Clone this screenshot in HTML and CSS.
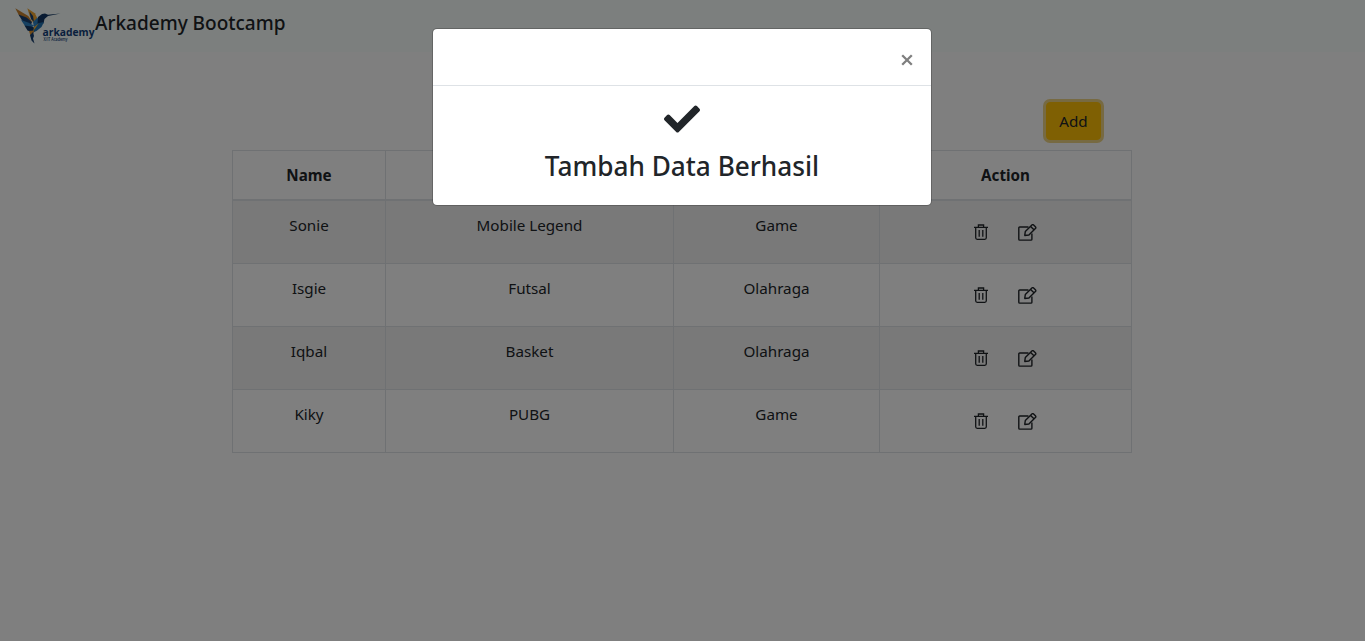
FILE: index.html
```html
<!DOCTYPE html>
<html lang="id">
<head>
<meta charset="utf-8">
<title>Arkademy Bootcamp</title>
<link rel="stylesheet" href="styles.css">
</head>
<body>
<svg class="sprite" width="0" height="0">
  <symbol id="trash" viewBox="0 0 14 16">
    <g fill="none" stroke="currentColor" stroke-width="1.3">
      <path d="M0 3.3h14M4.4 3V1h5.2v2M1.7 3.5v10.3c0 .9.6 1.5 1.5 1.5h7.6c.9 0 1.5-.6 1.5-1.5V3.5M5.2 6v6.8M8.8 6v6.8"/>
    </g>
  </symbol>
  <symbol id="edit" viewBox="0 0 19 17">
    <g fill="none" stroke="currentColor" stroke-width="1.4" stroke-linejoin="round">
      <path d="M10.5 3H1.7a.9.9 0 0 0-.9.9v11.3c0 .5.4.9.9.9H13c.5 0 .9-.4.9-.9V9.500"/>
      <path d="M6.2 11l.5-3.200 6.600-6.600c.5-.5 1.200-.5 1.700 0l1.800 1.800c.5.5.5 1.200 0 1.700l-6.500 6.500-4.100.5zM12 2.600l3.400 3.400" transform="translate(.6 -.2)"/>
    </g>
  </symbol>
</svg>
<nav class="navbar">
  <svg class="logo" width="82" height="40" viewBox="0 0 82 40">
    <path fill="#c9822f" d="M1.300 2.300l13 7.700 4 6-5-2-8-4z"/>
    <path fill="#173f70" d="M4.500 8.500l8 3 5.500 4.500-1 3-8-3z"/>
    <path fill="#2d83c5" d="M7 14l7 2.500 6 3-3 2.500-6-2z"/>
    <path fill="#123764" d="M10.500 19.500l7 1 5 2-3 4-6-2z"/>
    <path fill="#f0a52e" d="M13.300 2.300l7.500 5 2.500 5-4 5-3.500-7z"/>
    <path fill="#173f70" d="M15.500 5.500l3.500 4.500 1 6-3-3z"/>
    <path fill="#2d83c5" d="M19 16l4.500-4.500 2 6-5.500 4z"/>
    <path fill="#123764" d="M24 11l4-3 3-.5 3 1.200 12.500-1.300-12.500 2.600-3.500 3-1 4.500-6 0z"/>
    <path fill="#f2b134" d="M20 21l5.500-4-1.500 5-5 4z"/>
    <path fill="#2372b0" d="M25 17l5-1-2.500 5-5 4-5 2 4-5z"/>
    <path fill="#e3942c" d="M15 25l5-.5-1 4-2 3z"/>
    <path fill="#173f70" d="M16 29l3-3 1 4-1 2.500 1.500 5-3-3z"/>
    <text class="logo-name" x="28.500" y="29.500" textLength="52" lengthAdjust="spacingAndGlyphs">arkademy</text>
    <text class="logo-sub" x="29.500" y="35.200" textLength="24" lengthAdjust="spacingAndGlyphs">X/IT Academy</text>
  </svg>
  <span class="brand">Arkademy Bootcamp</span>
</nav>
<main class="container">
  <div class="toolbar"><button class="btn-add">Add</button></div>
  <table class="table">
    <colgroup><col class="c-name"><col class="c-hobby"><col class="c-cat"><col class="c-action"></colgroup>
    <thead><tr><th>Name</th><th></th><th></th><th>Action</th></tr></thead>
    <tbody>
      <tr><td>Sonie</td><td>Mobile Legend</td><td>Game</td><td><div class="actions"><svg class="i-trash"><use href="#trash"/></svg><svg class="i-edit"><use href="#edit"/></svg></div></td></tr>
      <tr><td>Isgie</td><td>Futsal</td><td>Olahraga</td><td><div class="actions"><svg class="i-trash"><use href="#trash"/></svg><svg class="i-edit"><use href="#edit"/></svg></div></td></tr>
      <tr><td>Iqbal</td><td>Basket</td><td>Olahraga</td><td><div class="actions"><svg class="i-trash"><use href="#trash"/></svg><svg class="i-edit"><use href="#edit"/></svg></div></td></tr>
      <tr><td>Kiky</td><td>PUBG</td><td>Game</td><td><div class="actions"><svg class="i-trash"><use href="#trash"/></svg><svg class="i-edit"><use href="#edit"/></svg></div></td></tr>
    </tbody>
  </table>
</main>
<div class="backdrop">
  <div class="modal">
    <div class="modal-header"><svg class="close" width="12" height="12" viewBox="0 0 12 12"><path d="M1.200 1.200l9.600 9.600M10.800 1.200l-9.600 9.600" stroke="#7f7f7f" stroke-width="2.300"/></svg></div>
    <div class="modal-body">
      <svg class="check" width="36" height="36" viewBox="0 0 512 512"><path fill="#212529" d="M173.898 439.404l-166.400-166.400c-9.997-9.997-9.997-26.206 0-36.204l36.203-36.204c9.997-9.998 26.207-9.998 36.204 0L192 312.690 432.095 72.596c9.997-9.997 26.207-9.997 36.204 0l36.203 36.204c9.997 9.997 9.997 26.206 0 36.204l-294.400 294.401c-9.998 9.997-26.207 9.997-36.204-.001z"/></svg>
      <h3 class="message">Tambah Data Berhasil</h3>
    </div>
  </div>
</div>
</body>
</html>
```
FILE: styles.css
```css
* { box-sizing: border-box; }
body {
  margin: 0;
  height: 641px;
  overflow: hidden;
  background: #fff;
  color: #212529;
  font: 400 15.2px/24px "Noto Sans", "Open Sans", sans-serif;
}
.sprite { position: absolute; }
.navbar {
  display: flex;
  height: 52px;
  padding: 6px 14px;
  background: #f8fffd;
}
.logo { display: block; flex: none; overflow: visible; }
.logo-name { font: 700 11px "Open Sans", sans-serif; fill: #123f7a; }
.logo-sub { font: 600 4.500px "Open Sans", sans-serif; fill: #123f7a; }
.brand {
  margin-left: -1px;
  font-size: 19px;
  font-weight: 500;
  line-height: 34px;
  white-space: nowrap;
}
.container { width: 900px; margin: 0 0 0 232px; padding-top: 49px; }
.toolbar { display: flex; justify-content: flex-end; height: 49px; padding-right: 31px; }
.btn-add {
  width: 55px;
  height: 38px;
  margin-top: 1px;
  padding: 0;
  border: 1px solid #ffc107;
  border-radius: 4px;
  background: #ffc107;
  box-shadow: 0 0 0 3px rgba(222, 170, 12, .5);
  color: #212529;
  font: inherit;
}
.table {
  width: 900px;
  border-collapse: collapse;
  table-layout: fixed;
  text-align: center;
}
.c-name { width: 153px; }
.c-hobby { width: 288px; }
.c-cat { width: 206px; }
.c-action { width: 252px; }
.table th, .table td { border: 1px solid #dee2e6; padding: 12px; vertical-align: top; }
.table th { height: 49px; padding-bottom: 11px; border-bottom-width: 2px; font-weight: 700; }
.table td { height: 63px; }
.table tbody tr:nth-child(odd) { background: #f2f2f2; }
.actions { display: flex; justify-content: center; align-items: center; gap: 30px; height: 38px; padding-top: 1px; }
.i-trash { width: 14px; height: 16px; }
.i-edit { width: 19px; height: 17px; }
.backdrop {
  position: absolute;
  inset: 0;
  display: flex;
  justify-content: center;
  align-items: flex-start;
  padding-top: 28px;
  background: rgba(0, 0, 0, .5);
}
.modal {
  width: 500px;
  height: 178px;
  margin-right: 1px;
  border: 1px solid rgba(0, 0, 0, .2);
  border-radius: 5px;
  background: #fff;
  background-clip: padding-box;
}
.modal-header {
  display: flex;
  justify-content: flex-end;
  height: 57px;
  padding: 25px 18.500px 0 0;
  border-bottom: 1px solid #dee2e6;
}
.modal-body { padding-top: 15px; text-align: center; }
.check { display: block; margin: 0 auto; }
.message { margin: 12px 0 0; font-size: 26.200px; font-weight: 500; line-height: 34px; }
```
